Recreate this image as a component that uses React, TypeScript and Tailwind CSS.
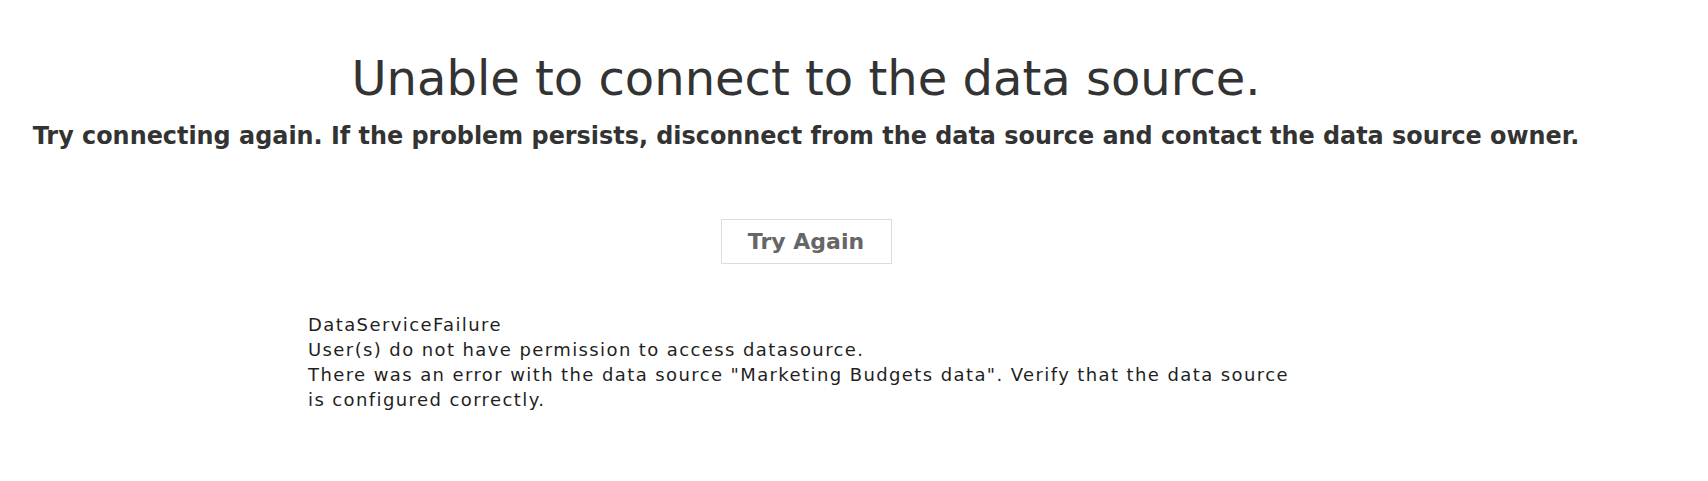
export default function App() {
  return (
    <div className="h-[481px] w-[1708px] bg-white">
      <div className="flex w-[1612px] flex-col items-center pt-[48px]">
        <h1 className="font-['DejaVu_Sans',sans-serif] text-[48px] leading-[60px] font-normal text-[#333]">
          Unable to connect to the data source.
        </h1>
        <p className="mt-[13px] font-['DejaVu_Sans',sans-serif] text-[23.9px] leading-[30px] font-bold text-[#333]">
          Try connecting again. If the problem persists, disconnect from the data source and contact the data source owner.
        </p>
        <button className="mt-[68px] h-[45px] w-[171px] border border-[#dcdcdc] bg-white font-['DejaVu_Sans',sans-serif] text-[22px] font-bold text-[#666]">
          Try Again
        </button>
      </div>
      <div className="mt-[48px] ml-[308px] w-[1100px] font-['DejaVu_Sans',sans-serif] text-[18px] leading-[25px] tracking-[1.4px] text-[#1f1f1f]">
        <div>DataServiceFailure</div>
        <div>User(s) do not have permission to access datasource.</div>
        <div>
          There was an error with the data source "Marketing Budgets data". Verify that the data source
          <br />
          is configured correctly.
        </div>
      </div>
    </div>
  );
}
